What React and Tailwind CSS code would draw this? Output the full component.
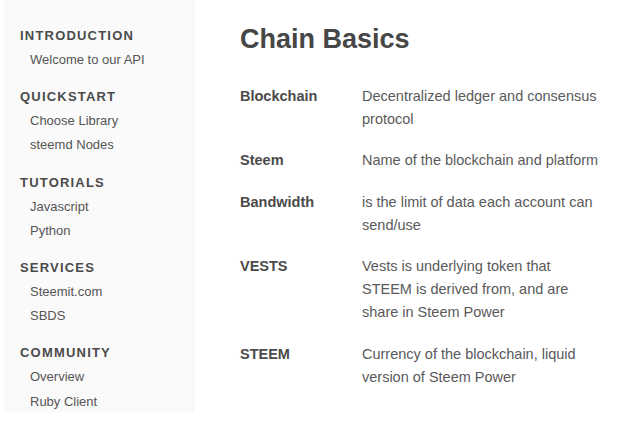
import React from "react";

const sections = [
  { title: "INTRODUCTION", items: ["Welcome to our API"] },
  { title: "QUICKSTART", items: ["Choose Library", "steemd Nodes"] },
  { title: "TUTORIALS", items: ["Javascript", "Python"] },
  { title: "SERVICES", items: ["Steemit.com", "SBDS"] },
  { title: "COMMUNITY", items: ["Overview", "Ruby Client"] },
];

const terms = [
  ["Blockchain", "Decentralized ledger and consensus protocol"],
  ["Steem", "Name of the blockchain and platform"],
  ["Bandwidth", "is the limit of data each account can send/use"],
  ["VESTS", "Vests is underlying token that STEEM is derived from, and are share in Steem Power"],
  ["STEEM", "Currency of the blockchain, liquid version of Steem Power"],
];

const App = () => {
  return (
    <div
      className="flex min-h-screen bg-white"
      style={{ fontFamily: '"Liberation Sans", Arial, sans-serif' }}
    >
      {/* SIDEBAR */}
      <aside className="ml-[4px] w-[190px] h-[412px] shrink-0 bg-[#fafafa] border-r border-[#f0f0f0] pl-[16px] pt-[24px] overflow-hidden">
        {sections.map((s) => (
          <div key={s.title} className="mb-[13px]">
            <div className="text-[13px] leading-[24px] font-bold tracking-[1.2px] text-[#4a4a4a]">
              {s.title}
            </div>
            {s.items.map((item) => (
              <div key={item} className="pl-[10px] text-[13px] leading-[24.2px] text-[#555]">
                {item}
              </div>
            ))}
          </div>
        ))}
      </aside>

      {/* CONTENT */}
      <main className="pl-[46px] pt-[23px]">
        <h1 className="text-[27px] leading-[32px] font-bold text-[#464646]">
          Chain Basics
        </h1>

        <div className="mt-[29.5px] flex flex-col gap-[18.5px]">
          {terms.map(([term, desc]) => (
            <div key={term} className="flex text-[14.5px] leading-[23px]">
              <div className="w-[122px] shrink-0 font-bold text-[#4a4a4a]">{term}</div>
              <div className="w-[240px] text-[#5a5a5a]">{desc}</div>
            </div>
          ))}
        </div>
      </main>
    </div>
  );
};

export default App;
